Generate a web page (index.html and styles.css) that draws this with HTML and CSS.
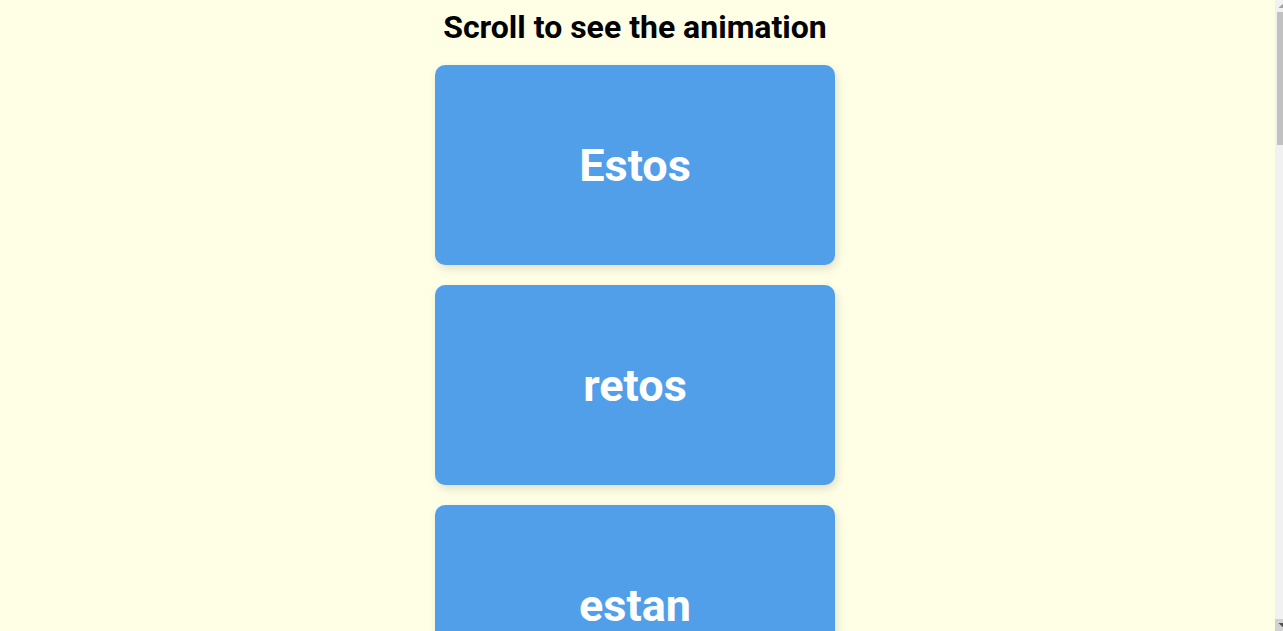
FILE: index.html
```html
<!DOCTYPE html>
<html>
<head>
<meta charset="utf-8">
<link rel="stylesheet" href="styles.css">
</head>
<body>
<main class="page">
<h1 class="title">Scroll to see the animation</h1>
<div class="box"><h2>Estos</h2></div>
<div class="box"><h2>retos</h2></div>
<div class="box"><h2>estan</h2></div>
<div class="box"><h2>geniales</h2></div>
<div class="box"><h2>y</h2></div>
<div class="box"><h2>me</h2></div>
<div class="box"><h2>encantan</h2></div>
</main>
<div class="scrollbar" aria-hidden="true">
  <div class="sb-btn">
    <svg width="8" height="12" viewBox="0 0 8 12"><polygon points="3.5,8 7.5,4 11.5,8" fill="#a3a3a3"/></svg>
  </div>
  <div class="sb-thumb"></div>
  <div class="sb-track"></div>
  <div class="sb-btn sb-btn-down">
    <svg width="8" height="12" viewBox="0 0 8 12"><polygon points="3.5,4 7.5,8 11.5,4" fill="#505050"/></svg>
  </div>
</div>
</body>
</html>
```
FILE: styles.css
```css
* { box-sizing: border-box; }
html, body {
  margin: 0;
  height: 100%;
  overflow: hidden;
}
body {
  background-color: #ffffe6;
  font-family: Roboto, "Liberation Sans", sans-serif;
}
.page {
  height: 100%;
  padding-right: 13px;
  overflow-x: hidden;
  overflow-y: auto;
  display: flex;
  flex-direction: column;
  align-items: center;
}
.title {
  margin: 8px 0 0;
  font-size: 32px;
  line-height: 38px;
  font-weight: 700;
  color: #000;
}
.box {
  flex-shrink: 0;
  width: 400px;
  height: 200px;
  margin: 10px;
  border-radius: 10px;
  background-color: #519fe9;
  color: #fff;
  display: flex;
  align-items: center;
  justify-content: center;
  box-shadow: 2px 4px 10px rgba(0, 0, 0, 0.12);
}
.box:first-of-type { margin-top: 19px; }
.box h2 {
  margin: 0;
  font-size: 45px;
  font-weight: 700;
}

/* scrollbar as drawn by the browser, partly cut off at the right edge */
.scrollbar {
  position: fixed;
  top: 0;
  right: 0;
  width: 8px;
  height: 100%;
  background: #f1f1f1;
  display: flex;
  flex-direction: column;
}
.sb-btn {
  height: 12px;
  flex-shrink: 0;
  display: block;
}
.sb-btn svg { display: block; }
.sb-btn-down { background: #d2d2d2; }
.sb-thumb {
  height: 133px;
  margin-left: 2px;
  background: #c1c1c1;
  flex-shrink: 0;
}
.sb-track { flex: 1; }
```
